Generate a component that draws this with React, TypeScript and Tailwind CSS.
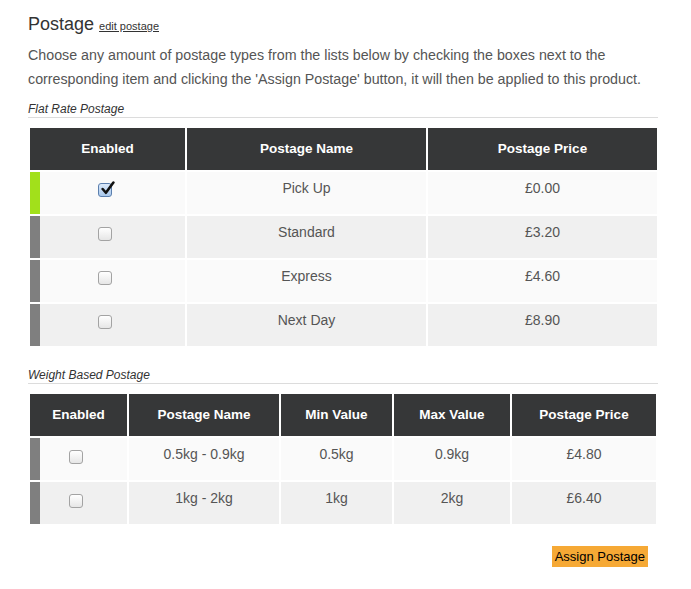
import React from "react";

const flatRates = [
  { name: "Pick Up", price: "£0.00", on: true },
  { name: "Standard", price: "£3.20", on: false },
  { name: "Express", price: "£4.60", on: false },
  { name: "Next Day", price: "£8.90", on: false },
];

const weightRates = [
  { name: "0.5kg - 0.9kg", min: "0.5kg", max: "0.9kg", price: "£4.80" },
  { name: "1kg - 2kg", min: "1kg", max: "2kg", price: "£6.40" },
];

function Check({ on }: { on: boolean }) {
  if (on) {
    return (
      <span className="relative mx-auto block h-[14px] w-[14px] -translate-x-[3px] rounded-[3px] border border-[#5b7fae] bg-gradient-to-b from-[#dbe9f9] to-[#a9c8ec]">
        <svg viewBox="0 0 14 14" className="absolute -top-[3px] left-[1px] h-[15px] w-[15px]">
          <path d="M2.5 7.5 L5.5 11 L12.5 1.5" fill="none" stroke="#111" strokeWidth="2.4" strokeLinecap="round" strokeLinejoin="round" />
        </svg>
      </span>
    );
  }
  return (
    <span className="mx-auto block h-[14px] w-[14px] -translate-x-[3px] rounded-[3px] border border-[#a3a3a3] bg-gradient-to-b from-white to-[#e6e6e6]" />
  );
}

function Label({ children, mt }: { children: React.ReactNode; mt: string }) {
  return (
    <div className={`${mt} border-b border-[#dcdcdc] text-[12px] italic leading-[15px] text-[#333]`}>
      {children}
    </div>
  );
}

const th = "h-[42px] bg-[#363738] p-0 text-center align-middle text-[13.5px] font-bold text-white";
const td = "p-0 pt-[7px] text-center align-top text-[14px] leading-[18px] text-[#555]";

export default function App() {
  return (
    <div className="min-h-[589px] bg-white pl-[28px] pt-[12px]" style={{ fontFamily: '"Liberation Sans", Arial, sans-serif' }}>
      <div className="w-[630px]">
        <div className="flex h-[24px] items-baseline gap-[5px] leading-[24px] text-[#333]">
          <span className="text-[18px]">Postage</span>
          <a className="text-[11px] underline">edit postage</a>
        </div>
        <p className="mt-[7px] text-[14.25px] leading-[24px] text-[#555]">
          Choose any amount of postage types from the lists below by checking the boxes next to the corresponding item and clicking the 'Assign Postage' button, it will then be applied to this product.
        </p>

        <Label mt="mt-[11px]">Flat Rate Postage</Label>
        <table className="mt-[8px] table-fixed border-separate border-spacing-[2px]" style={{ width: 631 }}>
          <thead>
            <tr>
              <th className={`${th} w-[155px]`}>Enabled</th>
              <th className={`${th} w-[239px]`}>Postage Name</th>
              <th className={`${th} w-[229px]`}>Postage Price</th>
            </tr>
          </thead>
          <tbody>
            {flatRates.map((r, i) => {
              const bg = i % 2 === 0 ? "bg-[#fafafa]" : "bg-[#f0f0f0]";
              return (
                <tr key={r.name} className="h-[42px]">
                  <td className={`${bg} p-0 pt-[11px] align-top ${r.on ? "shadow-[inset_10px_0_0_#a2e01b]" : "shadow-[inset_10px_0_0_#7f7f7f]"}`}>
                    <Check on={r.on} />
                  </td>
                  <td className={`${bg} ${td}`}>{r.name}</td>
                  <td className={`${bg} ${td}`}>{r.price}</td>
                </tr>
              );
            })}
          </tbody>
        </table>

        <Label mt="mt-[20px]">Weight Based Postage</Label>
        <table className="mt-[8px] table-fixed border-separate border-spacing-[2px]" style={{ width: 630 }}>
          <thead>
            <tr>
              <th className={`${th} w-[97px]`}>Enabled</th>
              <th className={`${th} w-[150px]`}>Postage Name</th>
              <th className={`${th} w-[111px]`}>Min Value</th>
              <th className={`${th} w-[116px]`}>Max Value</th>
              <th className={`${th} w-[144px]`}>Postage Price</th>
            </tr>
          </thead>
          <tbody>
            {weightRates.map((r, i) => {
              const bg = i % 2 === 0 ? "bg-[#fafafa]" : "bg-[#f0f0f0]";
              return (
                <tr key={r.name} className="h-[42px]">
                  <td className={`${bg} p-0 pt-[12px] align-top shadow-[inset_10px_0_0_#7f7f7f]`}>
                    <Check on={false} />
                  </td>
                  <td className={`${bg} ${td}`}>{r.name}</td>
                  <td className={`${bg} ${td}`}>{r.min}</td>
                  <td className={`${bg} ${td}`}>{r.max}</td>
                  <td className={`${bg} ${td}`}>{r.price}</td>
                </tr>
              );
            })}
          </tbody>
        </table>

        <div className="mt-[20px] flex justify-end pr-[10px]">
          <button className="bg-[#f6a935] px-[3px] text-[13px] leading-[21px] text-black">Assign Postage</button>
        </div>
      </div>
    </div>
  );
}
